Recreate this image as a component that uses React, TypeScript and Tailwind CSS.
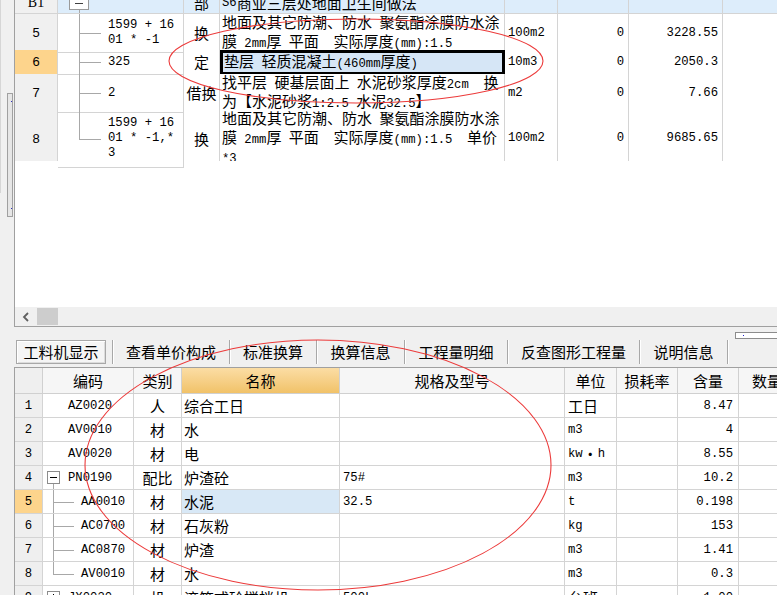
import React from 'react';

const MONO = "font-['Liberation_Mono',monospace] text-[12.25px]";
const LINE = 'border-r border-b border-[#d4d4d4]';
const TOP_COLS = 'grid grid-cols-[43px_126px_36px_285px_53px_71px_94px_60px]';
const BOT_COLS = 'grid grid-cols-[28px_91px_48px_158px_225px_52px_61px_61px_58px]';

// split text into ascii / cjk runs so ascii gets the narrow mono face
function Mix({ text }: { text: string }) {
  const parts = text.split(/([\x20-\x7e]+)/).filter(Boolean);
  return (
    <>
      {parts.map((p, i) =>
        /^[\x20-\x7e]+$/.test(p) ? (
          <span key={i} className={MONO}>
            {p}
          </span>
        ) : (
          <span key={i}>{p}</span>
        )
      )}
    </>
  );
}

type TopRow = {
  no: string;
  h: string;
  code: string[];
  kind: string;
  name: string[];
  unit: string;
  a: string;
  b: string;
  sel?: boolean;
  last?: boolean;
};

const topRows: TopRow[] = [
  {
    no: '5',
    h: 'h-[36px]',
    code: ['1599 + 16', '01 * -1'],
    kind: '换',
    name: ['地面及其它防潮、防水 聚氨酯涂膜防水涂', '膜 2mm厚 平面  实际厚度(mm):1.5'],
    unit: '100m2',
    a: '0',
    b: '3228.55',
  },
  {
    no: '6',
    h: 'h-[24px]',
    code: ['325'],
    kind: '定',
    name: ['垫层 轻质混凝土(460mm厚度)'],
    unit: '10m3',
    a: '0',
    b: '2050.3',
    sel: true,
  },
  {
    no: '7',
    h: 'h-[36px]',
    code: ['2'],
    kind: '借换',
    name: ['找平层 硬基层面上 水泥砂浆厚度2cm  换', '为【水泥砂浆1:2.5 水泥32.5】'],
    unit: 'm2',
    a: '0',
    b: '7.66',
  },
  {
    no: '8',
    h: 'h-[51px]',
    code: ['1599 + 16', '01 * -1,*', '3'],
    kind: '换',
    name: ['地面及其它防潮、防水 聚氨酯涂膜防水涂', '膜 2mm厚 平面  实际厚度(mm):1.5  单价', '*3'],
    unit: '100m2',
    a: '0',
    b: '9685.65',
    last: true,
  },
];

type BotRow = {
  no: string;
  code: string;
  kind: string;
  name: string;
  spec?: string;
  unit: string;
  qty: string;
  tree?: 'open' | 'closed' | 'child' | 'last';
  sel?: boolean;
};

const botRows: BotRow[] = [
  { no: '1', code: 'AZ0020', kind: '人', name: '综合工日', unit: '工日', qty: '8.47' },
  { no: '2', code: 'AV0010', kind: '材', name: '水', unit: 'm3', qty: '4' },
  { no: '3', code: 'AV0020', kind: '材', name: '电', unit: 'kw・h', qty: '8.55' },
  { no: '4', code: 'PN0190', kind: '配比', name: '炉渣砼', spec: '75#', unit: 'm3', qty: '10.2', tree: 'open' },
  { no: '5', code: 'AA0010', kind: '材', name: '水泥', spec: '32.5', unit: 't', qty: '0.198', tree: 'child', sel: true },
  { no: '6', code: 'AC0700', kind: '材', name: '石灰粉', unit: 'kg', qty: '153', tree: 'child' },
  { no: '7', code: 'AC0870', kind: '材', name: '炉渣', unit: 'm3', qty: '1.41', tree: 'child' },
  { no: '8', code: 'AV0010', kind: '材', name: '水', unit: 'm3', qty: '0.3', tree: 'last' },
  { no: '9', code: 'JX0030', kind: '机', name: '滚筒式砼搅拌机', spec: '500L', unit: '台班', qty: '1.00', tree: 'closed' },
];

function TreeBox({ open }: { open: boolean }) {
  return (
    <div className="relative w-[13px] h-[13px] border border-[#8c8c8c] bg-white">
      <div className="absolute left-[2px] right-[2px] top-[5px] h-px bg-black" />
      {!open && <div className="absolute top-[2px] bottom-[2px] left-[5px] w-px bg-black" />}
    </div>
  );
}

function LeftStrip() {
  return (
    <div className="w-[14px] flex shrink-0">
      <div className="w-px h-[193px] bg-[#d6d6d6]" />
      <div className="ml-[6px] mt-[93px] w-[6px] h-[124px] border border-[#a0a0a0] bg-[#e6e6e6] flex flex-col justify-between items-end py-[7px]">
        <div className="w-px h-px bg-[#3030c0]" />
        <div className="w-px h-px bg-[#3030c0]" />
      </div>
    </div>
  );
}

function TopTable() {
  const cut = `${LINE} overflow-hidden flex items-end pb-[2px] leading-[16px]`;
  return (
    <div className="flex-1 flex flex-col border-l border-b border-[#a0a0a0] overflow-hidden">
      {/* cut-off group row */}
      <div className={`${TOP_COLS} grid-rows-[14px] h-[14px] overflow-hidden bg-[#ddedfb]`}>
        <div className={`${cut} bg-[#f0f0f0] justify-center font-['Liberation_Serif',serif] text-[14px]`}>B1</div>
        <div className={`${LINE} relative`}>
          <div className="absolute left-[11px] bottom-[3px] w-[20px] h-[14px] border border-[#9a9a9a] bg-white">
            <div className="absolute left-[5px] right-[5px] top-[6px] h-px bg-[#404040]" />
          </div>
          <div className="absolute left-[21px] bottom-0 h-[3px] w-px bg-[#a8a8a8]" />
        </div>
        <div className={`${cut} justify-center`}>部</div>
        <div className={`${cut} pl-[2px] whitespace-nowrap`}>
          <Mix text="S6商业三层处地面卫生间做法" />
        </div>
        <div className={LINE} />
        <div className={LINE} />
        <div className={LINE} />
        <div className={LINE} />
      </div>

      {topRows.map((r) => (
        <div key={r.no} className={`${TOP_COLS} ${r.h} bg-white`}>
          <div
            className={`${LINE} flex items-center justify-center font-['Liberation_Sans',sans-serif] text-[13px] ${
              r.sel ? 'bg-[#fdd48c]' : 'bg-[#f0f0f0]'
            }`}
          >
            {r.no}
          </div>
          <div className={`${LINE} relative flex flex-col justify-center pl-[50px] leading-[15px]`}>
            <div className={`absolute left-[21px] top-0 w-px bg-[#a8a8a8] ${r.last ? 'h-1/2' : 'bottom-0'}`} />
            <div className="absolute left-[21px] top-1/2 w-[22px] h-px bg-[#a8a8a8]" />
            {r.code.map((c, i) => (
              <div key={i} className={`${MONO} whitespace-pre`}>
                {c}
              </div>
            ))}
          </div>
          <div className={`${LINE} flex items-center justify-center leading-[16px]`}>{r.kind}</div>
          <div
            className={
              r.sel
                ? 'border-[3px] border-black bg-[#d6e6f6] flex flex-col justify-center pl-[1px] leading-[16px]'
                : `${LINE} flex flex-col justify-center pl-[2px] leading-[16px]`
            }
          >
            {r.name.map((n, i) => (
              <div key={i} className="whitespace-pre">
                <Mix text={n} />
              </div>
            ))}
          </div>
          <div className={`${LINE} flex items-center pl-[3px] ${MONO}`}>{r.unit}</div>
          <div className={`${LINE} flex items-center justify-end pr-[4px] ${MONO}`}>{r.a}</div>
          <div className={`${LINE} flex items-center justify-end pr-[4px] ${MONO}`}>{r.b}</div>
          <div className={LINE} />
        </div>
      ))}

      <div className="flex-1 bg-white" />

      <div className="h-[19px] bg-[#f0f0f0] flex items-stretch">
        <div className="w-[22px] flex items-center justify-center">
          <svg width="8" height="10" viewBox="0 0 8 10">
            <path d="M6 1 L2 5 L6 9" fill="none" stroke="#606060" strokeWidth="1.8" />
          </svg>
        </div>
        <div className="w-[21px] my-px bg-[#cdcdcd]" />
      </div>
    </div>
  );
}

const tabs = [
  { label: '查看单价构成', w: 'w-[117px]' },
  { label: '标准换算', w: 'w-[87px]' },
  { label: '换算信息', w: 'w-[88px]' },
  { label: '工程量明细', w: 'w-[103px]' },
  { label: '反查图形工程量', w: 'w-[132px]' },
  { label: '说明信息', w: 'w-[88px]' },
];

function TabArea() {
  return (
    <div className="h-[40px] flex flex-col">
      <div className="h-[13px] flex">
        <div className="ml-auto mt-[5px] w-[42px] h-[7px] border-l border-t border-b border-[#8c8c8c] bg-white flex items-center pl-[7px]">
          <div className="w-px h-px bg-[#2020d0]" />
        </div>
      </div>
      <div className="h-[24px] flex pl-[16px] text-[15px] leading-[20px]">
        <div className="w-[90px] flex items-center justify-center border border-[#a8a8a8] bg-[#f5f5f5] shadow-[inset_1px_1px_0_#ffffff,inset_-1px_-1px_0_#dcdcdc]">
          工料机显示
        </div>
        <div className="w-[6px]" />
        {tabs.map((t) => (
          <div
            key={t.label}
            className={`${t.w} flex items-center justify-center border-l border-[#a8a8a8] shadow-[inset_1px_0_0_#ffffff]`}
          >
            {t.label}
          </div>
        ))}
        <div className="flex-1 border-l border-[#a8a8a8] shadow-[inset_1px_0_0_#ffffff]" />
      </div>
    </div>
  );
}

function BottomTable() {
  const head = 'border-r border-b border-[#d0d0d0] flex items-center justify-center';
  return (
    <div className="ml-[14px] w-[782px] border-l border-t border-[#a0a0a0] bg-white text-[15px] leading-[18px]">
      <div className={`${BOT_COLS} h-[26px] bg-[#f6f6f6]`}>
        <div className={`${head} bg-[#efefef]`} />
        <div className={head}>编码</div>
        <div className={head}>类别</div>
        <div className={`${head} bg-gradient-to-b from-[#fbdda4] to-[#f1c268]`}>名称</div>
        <div className={head}>规格及型号</div>
        <div className={head}>单位</div>
        <div className={head}>损耗率</div>
        <div className={head}>含量</div>
        <div className={`${head} justify-start pl-[13px] whitespace-nowrap`}>数量</div>
      </div>
      {botRows.map((r) => {
        const child = r.tree === 'child' || r.tree === 'last';
        return (
          <div key={r.no} className={`${BOT_COLS} h-[24px]`}>
            <div
              className={`${LINE} flex items-center justify-center ${MONO} ${r.sel ? 'bg-[#fdd48c]' : 'bg-[#efefef]'}`}
            >
              {r.no}
            </div>
            <div className={`${LINE} relative flex items-center ${child ? 'pl-[38px]' : 'pl-[25px]'}`}>
              {(r.tree === 'open' || r.tree === 'closed') && (
                <div className="absolute left-[4px] top-[5px]">
                  <TreeBox open={r.tree === 'open'} />
                </div>
              )}
              {r.tree === 'open' && <div className="absolute left-[10px] top-[18px] bottom-0 w-px bg-[#a8a8a8]" />}
              {child && (
                <>
                  <div
                    className={`absolute left-[10px] top-0 w-px bg-[#a8a8a8] ${r.tree === 'last' ? 'h-1/2' : 'bottom-0'}`}
                  />
                  <div className="absolute left-[10px] top-1/2 w-[21px] h-px bg-[#a8a8a8]" />
                </>
              )}
              <span className={MONO}>{r.code}</span>
            </div>
            <div className={`${LINE} flex items-center justify-center`}>{r.kind}</div>
            <div className={`${LINE} flex items-center pl-[2px] ${r.sel ? 'bg-[#d8e8f6]' : ''}`}>{r.name}</div>
            <div className={`${LINE} flex items-center pl-[3px] ${MONO}`}>{r.spec ?? ''}</div>
            <div className={`${LINE} flex items-center pl-[3px]`}>
              <Mix text={r.unit} />
            </div>
            <div className={LINE} />
            <div className={`${LINE} flex items-center justify-end pr-[5px] ${MONO}`}>{r.qty}</div>
            <div className={LINE} />
          </div>
        );
      })}
    </div>
  );
}

export default function App() {
  return (
    <div className="relative w-[777px] h-[595px] overflow-hidden bg-[#f0f0f0] text-black font-['Noto_Sans_CJK_SC',sans-serif] text-[15px]">
      <div className="flex h-[327px]">
        <LeftStrip />
        <TopTable />
      </div>
      <TabArea />
      <BottomTable />

      {/* red hand-drawn marks over the screenshot */}
      <svg className="absolute inset-0 pointer-events-none" width="777" height="595" viewBox="0 0 777 595">
        <ellipse cx="356" cy="61" rx="187" ry="42" fill="none" stroke="#ec3a3a" strokeWidth="1.1" />
        <ellipse cx="318" cy="465" rx="233" ry="125" fill="none" stroke="#ec3a3a" strokeWidth="1.1" />
      </svg>
    </div>
  );
}
